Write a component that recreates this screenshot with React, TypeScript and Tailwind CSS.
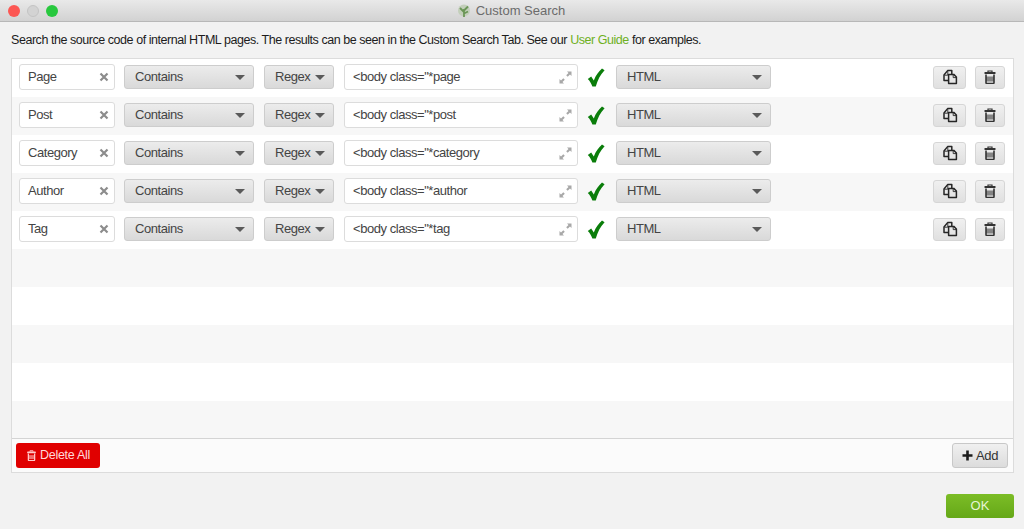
import React from "react";

const font = { fontFamily: '"Liberation Sans", Arial, sans-serif' };

function Caret() {
  return (
    <svg width="10" height="5" viewBox="0 0 10 5" className="shrink-0">
      <path d="M0 0h10L5 5z" fill="#5a5a5a" />
    </svg>
  );
}

function Select({ label, width }: { label: string; width: string }) {
  return (
    <div
      className={`${width} h-6 shrink-0 flex items-center justify-between pl-[10px] pr-[8px] rounded-[3px] border border-[#cdcdcd] bg-gradient-to-b from-[#ececec] to-[#d9d9d9] text-[13px] tracking-[-0.45px] text-[#444]`}
    >
      <span>{label}</span>
      <Caret />
    </div>
  );
}

function CopyIcon() {
  return (
    <svg width="16" height="16" viewBox="0 0 16 16" fill="none" stroke="#262626" strokeWidth="1.5" strokeLinejoin="round">
      <path d="M6.4 11.4H2V6L5.6 1.6H9.8V5.4" />
      <path d="M2.4 6.2H5.8V2.2" strokeWidth="0.9" />
      <path d="M6.6 5.4H11.8L14.4 8V14.6H6.6z" />
      <path d="M11.2 5.8V8.6H14" strokeWidth="0.9" />
    </svg>
  );
}

function TrashIcon({ color = "#333", size = 14 }: { color?: string; size?: number }) {
  return (
    <svg width={size} height={size} viewBox="0 0 14 14" fill="none">
      <path d="M5 2V1h4v1" stroke={color} strokeWidth="1.2" />
      <rect x="1.5" y="2" width="11" height="2" rx="0.5" fill={color} />
      <path d="M3 4.5V12.5a1 1 0 0 0 1 1h6a1 1 0 0 0 1-1V4.5" stroke={color} strokeWidth="1.6" />
      <path d="M3 6.5h8v5H3z" fill={color} fillOpacity="0.55" />
    </svg>
  );
}

function Row({ name, regex, shaded }: { name: string; regex: string; shaded: boolean }) {
  return (
    <div className={`h-[38px] shrink-0 flex items-center pl-[7px] pr-[8px] pb-[2px] ${shaded ? "bg-[#f7f7f7]" : "bg-white"}`}>
      <div className="w-[96px] h-[26px] shrink-0 flex items-center justify-between pl-[8px] pr-[5px] bg-white rounded-[3px] border border-[#dcdcdc] text-[13px] tracking-[-0.45px] text-[#444]">
        <span>{name}</span>
        <svg width="10" height="10" viewBox="0 0 10 10">
          <path d="M1.5 1.5l7 7M8.5 1.5l-7 7" stroke="#8c8c8c" strokeWidth="2.2" />
        </svg>
      </div>
      <div className="w-[9px] shrink-0" />
      <Select label="Contains" width="w-[130px]" />
      <div className="w-[10px] shrink-0" />
      <Select label="Regex" width="w-[70px]" />
      <div className="w-[10px] shrink-0" />
      <div className="w-[234px] h-[26px] shrink-0 flex items-center justify-between pl-[8px] pr-[5px] bg-white rounded-[3px] border border-[#dcdcdc] text-[13px] tracking-[-0.45px] text-[#444]">
        <span>{regex}</span>
        <svg width="13" height="13" viewBox="0 0 13 13" fill="#a8a8a8">
          <path d="M8 0.5h4.5V5L11 3.5 8.7 5.8 7.2 4.3 9.5 2z" />
          <path d="M5 12.5H0.5V8L2 9.5 4.3 7.2 5.8 8.7 3.5 11z" />
        </svg>
      </div>
      <div className="w-[38px] shrink-0 flex justify-center">
        <svg width="18" height="19" viewBox="0 0 18 19" className="-translate-x-[1px]">
          <path d="M0.8 11L4.2 8.6 6.8 12.4C8.8 7.6 11.6 3.6 15 0.6L17.6 2.2C13.4 6.6 10.6 12 8.8 18.6H5.4C4.4 15.6 2.8 13 0.8 11z" fill="#0a7d0a" />
        </svg>
      </div>
      <Select label="HTML" width="w-[155px]" />
      <div className="flex-1" />
      <div className="w-[33px] h-[23px] flex items-center justify-center rounded-[3px] border border-[#d6d6d6] bg-gradient-to-b from-[#f0f0f0] to-[#e0e0e0]">
        <CopyIcon />
      </div>
      <div className="w-[9px] shrink-0" />
      <div className="w-[30px] h-[23px] flex items-center justify-center rounded-[3px] border border-[#d6d6d6] bg-gradient-to-b from-[#f0f0f0] to-[#e0e0e0]">
        <TrashIcon />
      </div>
    </div>
  );
}

const rows = [
  ["Page", '<body class="*page'],
  ["Post", '<body class="*post'],
  ["Category", '<body class="*category'],
  ["Author", '<body class="*author'],
  ["Tag", '<body class="*tag'],
];

export default function App() {
  return (
    <div className="w-[1024px] h-[529px] overflow-hidden flex flex-col bg-[#f2f2f2]" style={font}>
      <div className="h-[22px] shrink-0 flex items-center relative border-b border-[#b8b8b8] bg-gradient-to-b from-[#e9e9e9] to-[#d2d2d2]">
        <div className="flex items-center gap-[7px] pl-[8px]">
          <div className="w-[12px] h-[12px] rounded-full bg-[#fc5753]" />
          <div className="w-[12px] h-[12px] rounded-full bg-[#d3d3d3] border border-[#c4c4c4]" />
          <div className="w-[12px] h-[12px] rounded-full bg-[#28c83e]" />
        </div>
        <div className="flex-1 flex items-center justify-center gap-[5px] pr-[60px] text-[13px] text-[#6b6b6b]">
          <svg width="14" height="15" viewBox="0 0 14 15">
            <circle cx="7" cy="7.5" r="6" fill="#c3cfba" />
            <path d="M7 14V6M7 9L3 5M7 7.5L11 3.5M7 10.5L11 8.5" stroke="#6b9657" strokeWidth="1.8" fill="none" />
          </svg>
          <span>Custom Search</span>
        </div>
      </div>
      <div className="h-[36px] shrink-0 flex items-center pl-[11px] text-[12.5px] tracking-[-0.45px] text-[#1c1c1c]">
        <span>
          Search the source code of internal HTML pages. The results can be seen in the Custom Search Tab. See our{" "}
          <span className="text-[#6eb01e]">User Guide</span> for examples.
        </span>
      </div>
      <div className="mx-[11px] w-[1003px] h-[415px] shrink-0 flex flex-col border border-[#dcdcdc] bg-[#fbfbfb]">
        <div className="h-[379px] shrink-0 flex flex-col overflow-hidden">
          {rows.map(([n, r], i) => (
            <Row key={n} name={n} regex={r} shaded={i % 2 === 1} />
          ))}
          {[5, 6, 7, 8, 9].map((i) => (
            <div key={i} className={`h-[38px] shrink-0 ${i % 2 === 1 ? "bg-[#f7f7f7]" : "bg-white"}`} />
          ))}
        </div>
        <div className="flex-1 flex items-center justify-between pl-[4px] pr-[5px] border-t border-[#d4d4d4]">
          <div className="w-[84px] h-[25px] flex items-center justify-center gap-[3px] rounded-[3px] bg-[#e00000] text-[12.5px] tracking-[-0.3px] text-[#ffd9d9]">
            <TrashIcon color="#ffc9c9" size={11} />
            <span>Delete All</span>
          </div>
          <div className="w-[56px] h-[25px] flex items-center justify-center gap-[3px] rounded-[3px] border border-[#c8c8c8] bg-gradient-to-b from-[#f0f0f0] to-[#dcdcdc] text-[13px] tracking-[-0.3px] text-[#333]">
            <svg width="11" height="11" viewBox="0 0 11 11">
              <path d="M5.5 0.5v10M0.5 5.5h10" stroke="#1c1c1c" strokeWidth="2.6" />
            </svg>
            <span>Add</span>
          </div>
        </div>
      </div>
      <div className="flex-1 flex items-start justify-end pt-[21px] pr-[10px]">
        <div className="w-[68px] h-[24px] flex items-center justify-center rounded-[3px] bg-gradient-to-b from-[#7cbd26] to-[#65a818] text-[13px] text-[#e6f5d4]">
          OK
        </div>
      </div>
    </div>
  );
}
